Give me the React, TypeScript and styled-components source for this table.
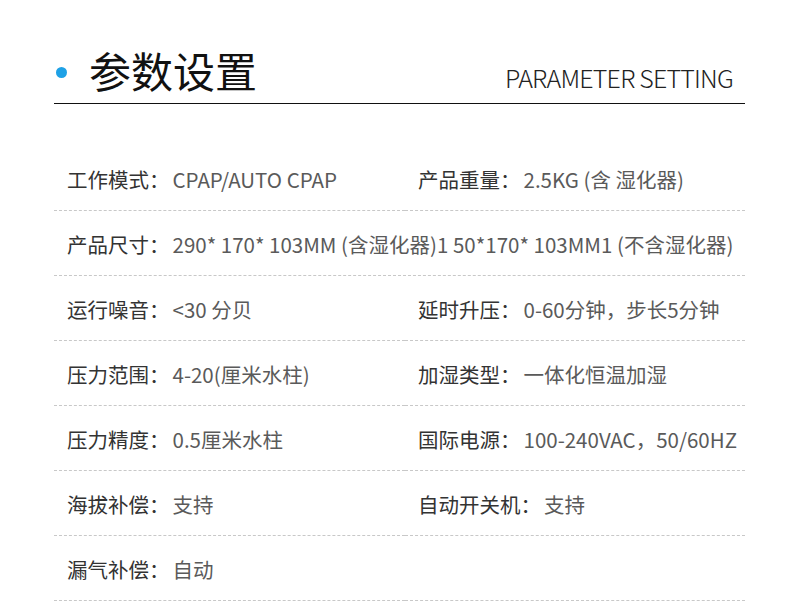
import React from "react";
import styled, {createGlobalStyle} from "styled-components";

const GlobalStyle = createGlobalStyle`
    html, body {
        margin: 0;
        padding: 0;
        background: #fff;
    }
    body {
        font-family: "Noto Sans CJK SC", "Noto Sans", sans-serif;
    }
`;

const Page = styled.div`
    width: 790px;
    height: 616px;
    overflow: hidden;
    padding: 0 45px 0 54px;
    box-sizing: border-box;
`;

const Header = styled.div`
    display: flex;
    align-items: flex-end;
    justify-content: space-between;
    height: 104px;
    border-bottom: 1.5px solid #111;
    box-sizing: border-box;
    padding-bottom: 5px;
`;

const TitleGroup = styled.div`
    display: flex;
    align-items: center;
    gap: 22px;
    padding-left: 2px;
`;

const Dot = styled.span`
    width: 11px;
    height: 11px;
    border-radius: 50%;
    background: #1ea1e6;
    margin-top: 4px;
`;

const Title = styled.h1`
    margin: 0;
    font-size: 42px;
    font-weight: 400;
    color: #111;
    line-height: 56px;
`;

const Subtitle = styled.span`
    font-size: 25px;
    font-weight: 300;
    color: #222;
    letter-spacing: -0.8px;
    line-height: 30px;
    margin-bottom: 6px;
    margin-right: 12px;
`;

const Table = styled.div`
    display: grid;
    grid-template-columns: 351px 1fr;
    margin-top: 42px;
`;

const Cell = styled.div<{$wide?: boolean}>`
    grid-column: ${props => (props.$wide ? "1 / span 2" : "auto")};
    height: 65px;
    display: flex;
    align-items: center;
    padding: 2px 0 0 13px;
    box-sizing: border-box;
    border-bottom: 1px dashed #c8c8c8;
    font-size: 20.5px;
    white-space: nowrap;
`;

const Label = styled.span`
    color: #333;
`;

const Value = styled.span`
    color: #5a5a5a;
    margin-left: 3px;
`;

type Spec = {label: string; value: string; wide?: boolean};

const specs: Spec[] = [
    {label: "工作模式", value: "CPAP/AUTO CPAP"},
    {label: "产品重量", value: "2.5KG (含 湿化器)"},
    {label: "产品尺寸", value: "290* 170* 103MM (含湿化器)1 50*170* 103MM1 (不含湿化器)", wide: true},
    {label: "运行噪音", value: "<30 分贝"},
    {label: "延时升压", value: "0-60分钟，步长5分钟"},
    {label: "压力范围", value: "4-20(厘米水柱)"},
    {label: "加湿类型", value: "一体化恒温加湿"},
    {label: "压力精度", value: "0.5厘米水柱"},
    {label: "国际电源", value: "100-240VAC，50/60HZ"},
    {label: "海拔补偿", value: "支持"},
    {label: "自动开关机", value: "支持"},
    {label: "漏气补偿", value: "自动"},
    {label: "", value: ""},
];

const App = () => {
    return (
        <>
            <GlobalStyle/>
            <Page>
                <Header>
                    <TitleGroup>
                        <Dot/>
                        <Title>参数设置</Title>
                    </TitleGroup>
                    <Subtitle>PARAMETER SETTING</Subtitle>
                </Header>
                <Table>
                    {specs.map((s, i) => (
                        <Cell key={i} $wide={s.wide}>
                            {s.label && <Label>{s.label}：</Label>}
                            {s.value && <Value>{s.value}</Value>}
                        </Cell>
                    ))}
                </Table>
            </Page>
        </>
    )
}

export default App
